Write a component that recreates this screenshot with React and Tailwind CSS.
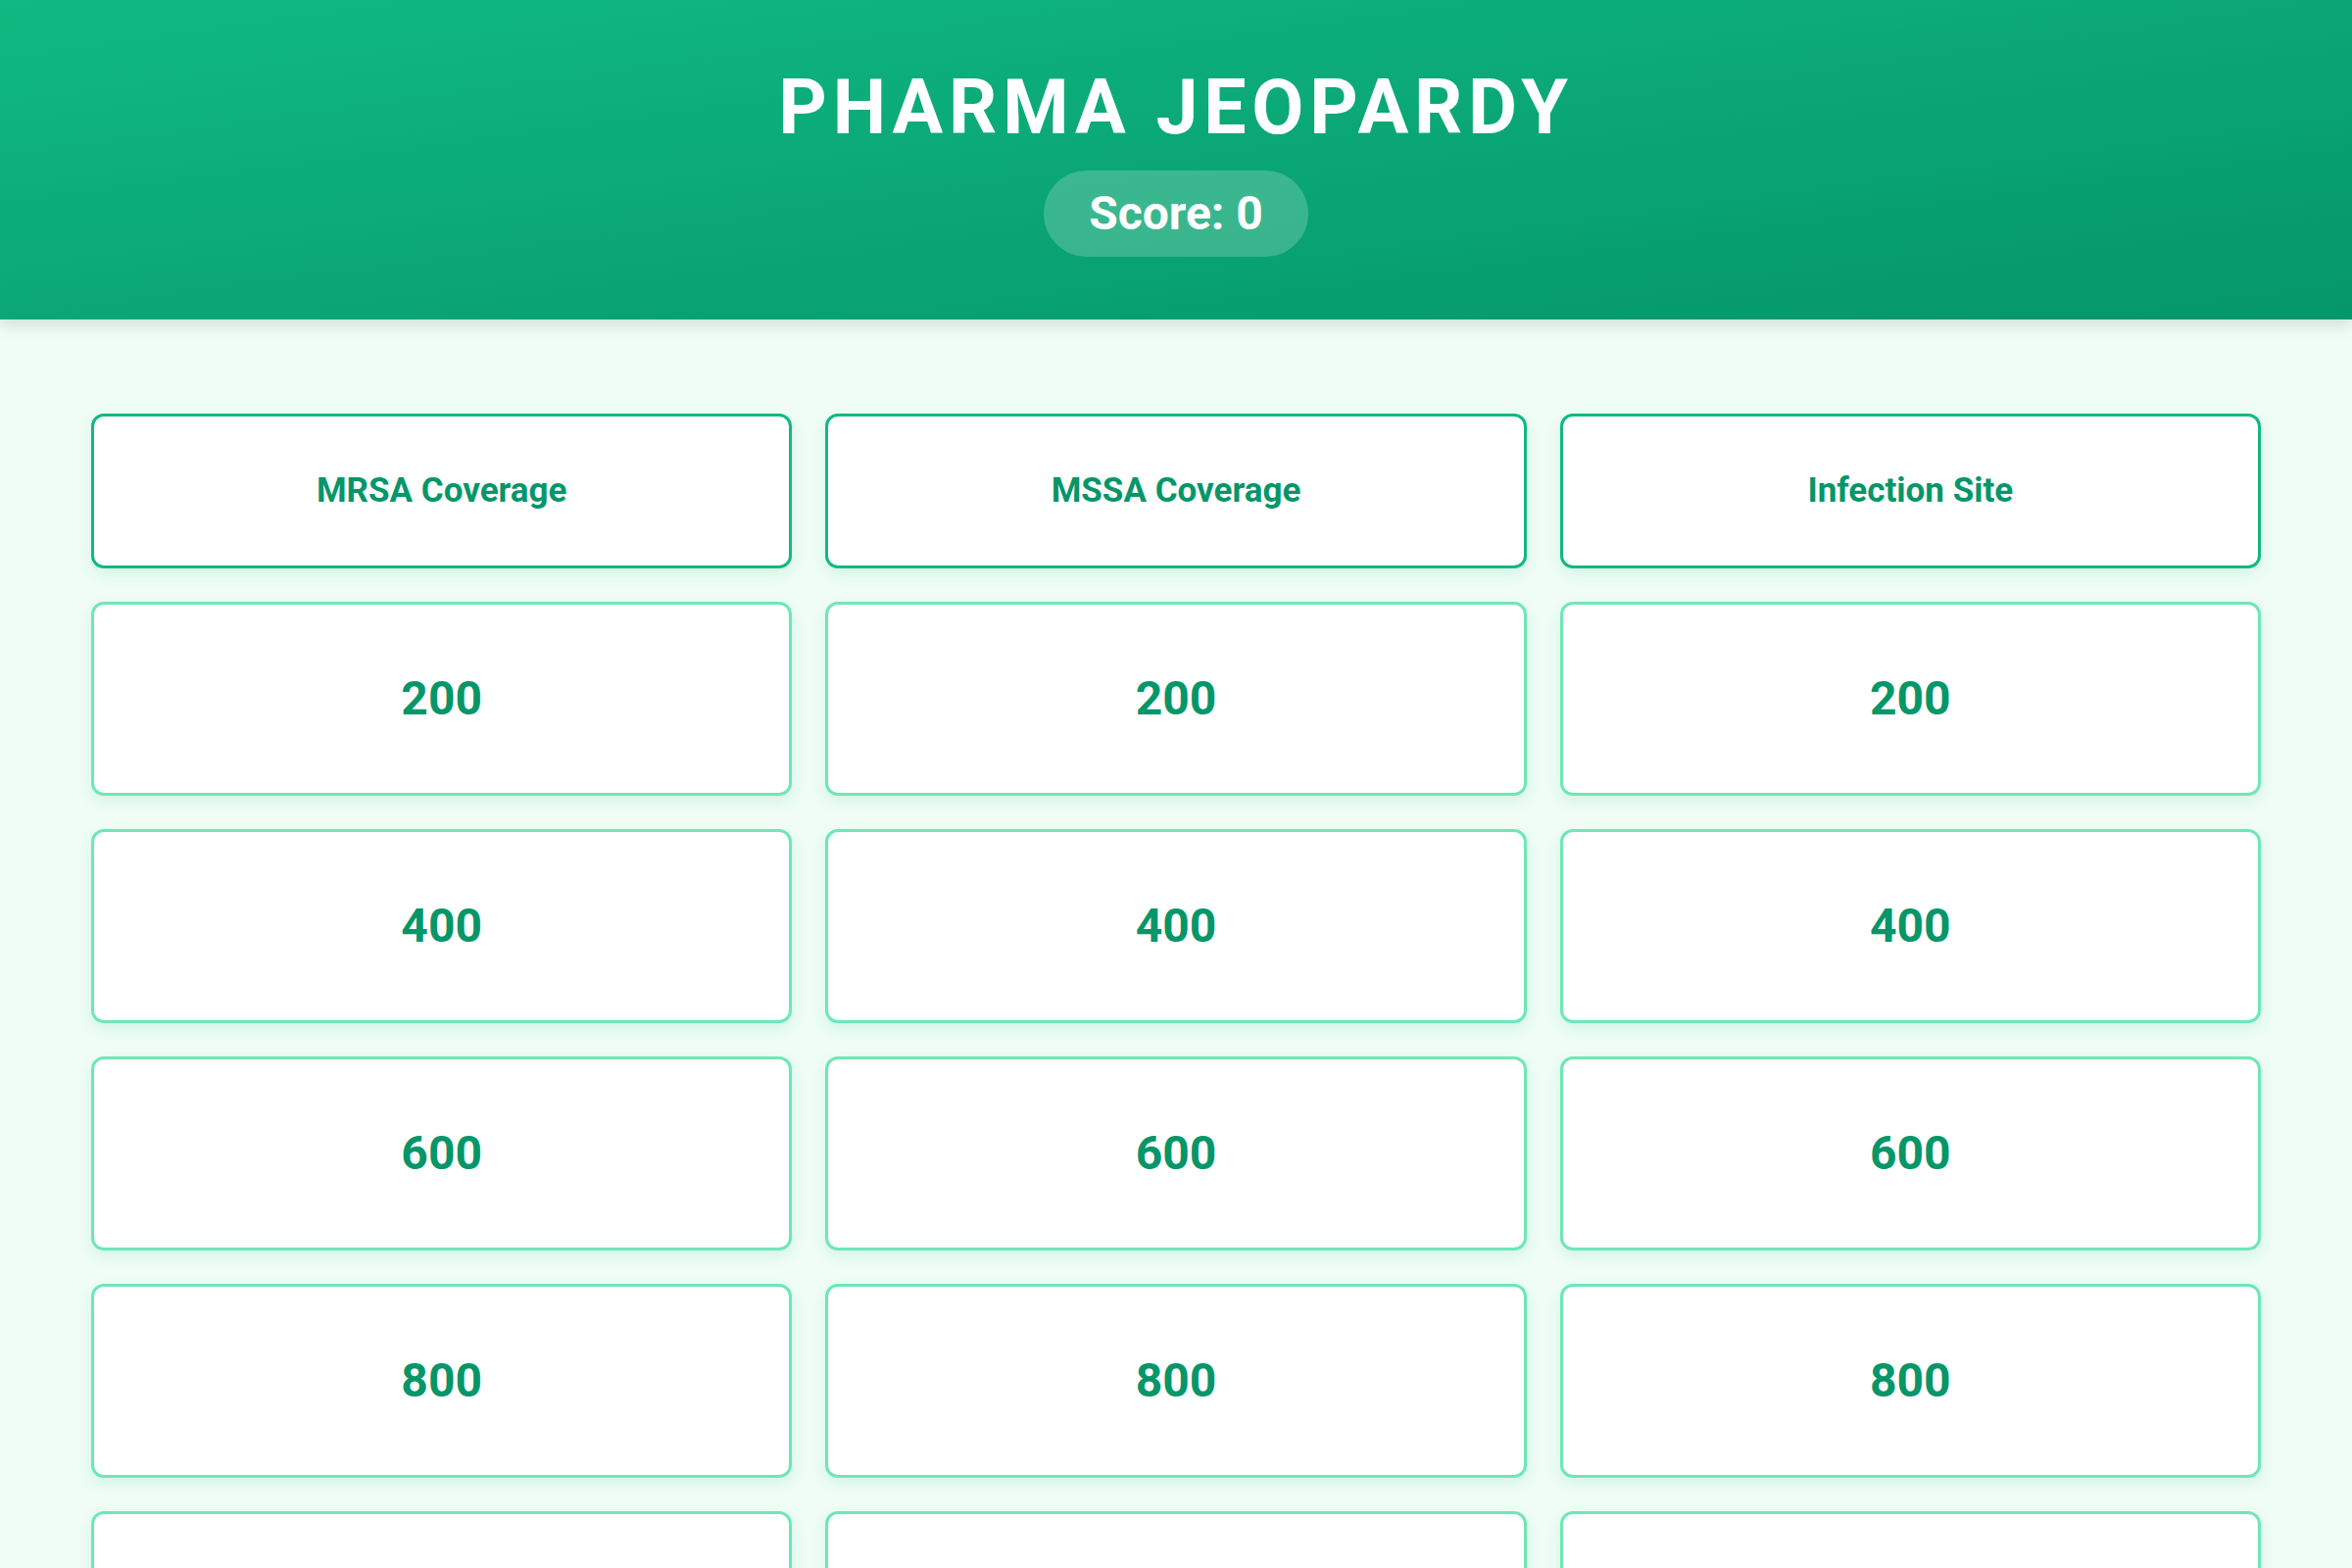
import React, { useState } from 'react';

const categories = ['MRSA Coverage', 'MSSA Coverage', 'Infection Site'];
const values = [200, 400, 600, 800, 1000];

const App = () => {
  const [score] = useState(0);

  return (
    <div className="min-h-screen bg-[#effdf5]" style={{ fontFamily: 'Roboto, "Liberation Sans", sans-serif' }}>
      {/* Header */}
      <header className="flex flex-col items-center bg-gradient-to-br from-[#10b981] to-[#059669] pt-[72px] pb-[64px] shadow-[0_6px_16px_rgba(0,0,0,0.12)]">
        <h1 className="text-[77px] leading-none font-bold tracking-[0.075em] text-white">PHARMA JEOPARDY</h1>
        <div className="mt-[25px] rounded-full bg-white/20 px-[46px] py-[20px] text-[48px] leading-none font-bold text-white">
          Score: {score}
        </div>
      </header>

      {/* Board */}
      <main className="px-[93px] pt-[96px] pb-[96px]">
        <div className="grid grid-cols-3 gap-x-[34px] gap-y-[34px]">
          {categories.map((c) => (
            <div
              key={c}
              className="flex h-[158px] items-center justify-center rounded-[13px] border-[3px] border-[#10b981] bg-white text-[35px] font-bold text-[#059669] shadow-[0_6px_14px_rgba(16,185,129,0.12)]"
            >
              {c}
            </div>
          ))}
          {values.map((v) =>
            categories.map((c) => (
              <button
                key={c + v}
                className="flex h-[198px] items-center justify-center rounded-[13px] border-[3px] border-[#6ee7b7] bg-white text-[48px] font-bold text-[#059669] shadow-[0_6px_14px_rgba(16,185,129,0.12)]"
              >
                {v}
              </button>
            ))
          )}
        </div>
      </main>
    </div>
  );
};

export default App;
